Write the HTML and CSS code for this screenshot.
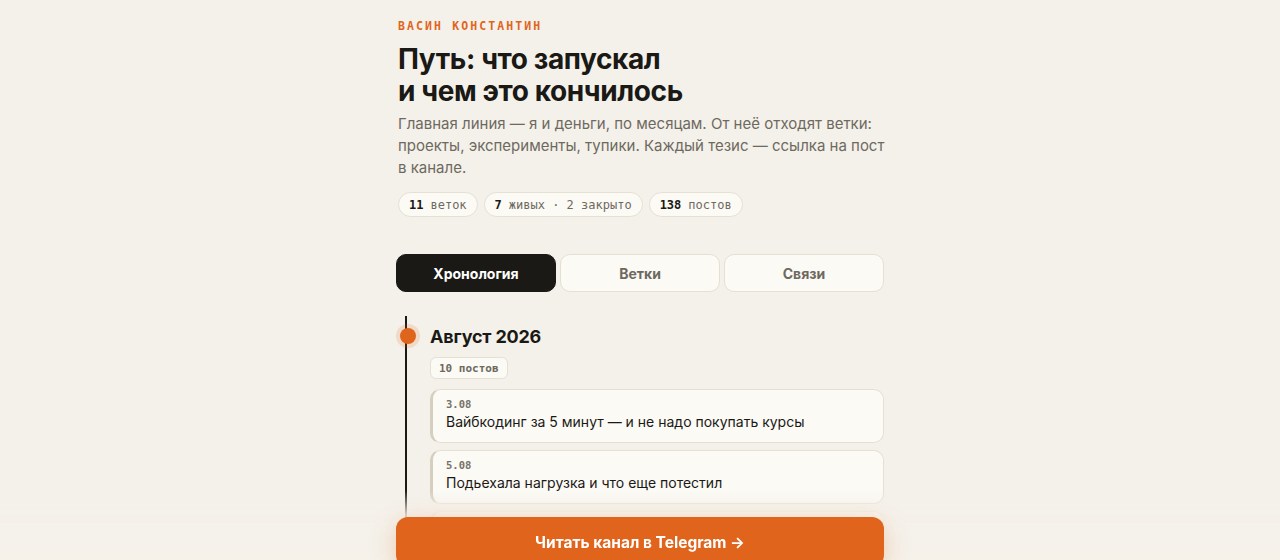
FILE: index.html
```html
<!DOCTYPE html>
<html lang="ru">
<head>
<meta charset="utf-8">
<title>Путь</title>
<link rel="stylesheet" href="styles.css">
</head>
<body>
<main class="page">
  <header class="intro">
    <div class="author">ВАСИН КОНСТАНТИН</div>
    <h1 class="title">Путь: что запускал<br>и чем это кончилось</h1>
    <p class="lead">Главная линия — я и деньги, по месяцам. От неё отходят ветки: проекты, эксперименты, тупики. Каждый тезис — ссылка на пост в канале.</p>
    <div class="stats">
      <span class="pill"><b>11</b> веток</span>
      <span class="pill"><b>7</b> живых · 2 закрыто</span>
      <span class="pill"><b>138</b> постов</span>
    </div>
  </header>

  <nav class="tabs">
    <button class="tab tab-active">Хронология</button>
    <button class="tab">Ветки</button>
    <button class="tab">Связи</button>
  </nav>

  <section class="timeline">
    <div class="month">
      <span class="dot"></span>
      <h2 class="month-title">Август 2026</h2>
      <span class="count">10 постов</span>
      <div class="posts">
        <a class="post"><span class="date">3.08</span><span class="post-title">Вайбкодинг за 5 минут — и не надо покупать курсы</span></a>
        <a class="post"><span class="date">5.08</span><span class="post-title">Подьехала нагрузка и что еще потестил</span></a>
        <a class="post"><span class="date">8.08</span><span class="post-title">Сделал первый платный проект</span></a>
      </div>
    </div>
  </section>
</main>
<div class="cta-wrap">
  <a class="cta">Читать канал в Telegram →</a>
</div>
</body>
</html>
```

FILE: styles.css
```css
* { box-sizing: border-box; }
html, body { margin: 0; padding: 0; }
body {
  background: #f4f1ea;
  font-family: Inter, "Noto Sans", sans-serif;
  color: #1a1915;
  overflow: hidden;
}
.page {
  width: 488px;
  margin: 0 auto;
  padding-top: 19px;
  padding-left: 2px;
}
.author {
  font-family: "DejaVu Sans Mono", monospace;
  font-weight: 700;
  font-size: 11.5px;
  letter-spacing: 2.1px;
  color: #e0651c;
  line-height: 14px;
}
.title {
  margin: 10px 0 0;
  font-size: 28px;
  line-height: 32px;
  font-weight: 700;
  letter-spacing: -0.4px;
  color: #1a1915;
}
.lead {
  margin: 6px -6px 0 0;
  font-size: 15px;
  line-height: 22px;
  color: #6e695f;
  letter-spacing: 0;
}
.stats {
  display: flex;
  gap: 6px;
  margin-top: 13px;
}
.pill {
  display: inline-flex;
  align-items: center;
  height: 25px;
  padding: 0 10px;
  border: 1px solid #e6e0d3;
  background: #fcfaf5;
  border-radius: 13px;
  font-family: "DejaVu Sans Mono", monospace;
  font-size: 12px;
  color: #6e695f;
}
.pill b {
  color: #1a1915;
  margin-right: 7px;
}
.tabs {
  display: grid;
  grid-template-columns: repeat(3, 1fr);
  gap: 4px;
  margin: 37px 0 0 -2px;
}
.tab {
  height: 38px;
  border: 1px solid #e6e0d3;
  background: #fcfaf5;
  border-radius: 10px;
  font-family: Inter, sans-serif;
  font-size: 14px;
  font-weight: 700;
  color: #6e695f;
  padding: 0;
}
.tab-active {
  background: #1a1915;
  border-color: #1a1915;
  color: #ffffff;
}
.timeline {
  margin: 24px 0 0 -2px;
}
.month {
  position: relative;
  padding-left: 34px;
  padding-top: 9px;
}
.month::before {
  content: "";
  position: absolute;
  left: 9px;
  top: 0;
  bottom: -40px;
  width: 2px;
  background: #1a1915;
}
.dot {
  position: absolute;
  left: 4px;
  top: 12px;
  width: 16px;
  height: 16px;
  border-radius: 50%;
  background: #e0651c;
  box-shadow: 0 0 0 4px rgba(224, 101, 28, 0.16);
}
.month-title {
  margin: 0;
  font-size: 18px;
  line-height: 24px;
  font-weight: 700;
  letter-spacing: -0.2px;
}
.count {
  display: inline-flex;
  align-items: center;
  margin-top: 8px;
  height: 22px;
  padding: 0 8px;
  border: 1px solid #e6e0d3;
  background: #fcfaf5;
  border-radius: 6px;
  font-family: "DejaVu Sans Mono", monospace;
  font-size: 11px;
  font-weight: 700;
  color: #6e695f;
}
.posts {
  display: flex;
  flex-direction: column;
  gap: 7px;
  margin-top: 10px;
}
.post {
  display: flex;
  flex-direction: column;
  gap: 1px;
  padding: 8px 14px 10px 13px;
  background: #fcfaf5;
  border: 1px solid #e6e0d3;
  border-left: 3px solid #d6cfbf;
  border-radius: 10px;
}
.date {
  font-family: "DejaVu Sans Mono", monospace;
  font-size: 10.5px;
  font-weight: 700;
  color: #77726a;
  line-height: 13px;
}
.post-title {
  font-size: 14px;
  line-height: 20px;
  color: #1a1915;
}
.cta-wrap {
  position: fixed;
  left: 0;
  right: 0;
  bottom: 0;
  height: 70px;
  display: flex;
  justify-content: center;
  align-items: flex-end;
  background: linear-gradient(to bottom, rgba(244, 241, 234, 0) 0%, rgba(244, 241, 234, 0.85) 35%, rgba(244, 241, 234, 0.95) 100%);
}
.cta {
  width: 488px;
  height: 50px;
  margin-bottom: -7px;
  display: flex;
  align-items: center;
  justify-content: center;
  background: #e0641c;
  color: #ffffff;
  border-radius: 12px;
  font-size: 15.5px;
  font-weight: 700;
  letter-spacing: 0;
  box-shadow: 0 6px 24px rgba(224, 100, 28, 0.28);
}
```
